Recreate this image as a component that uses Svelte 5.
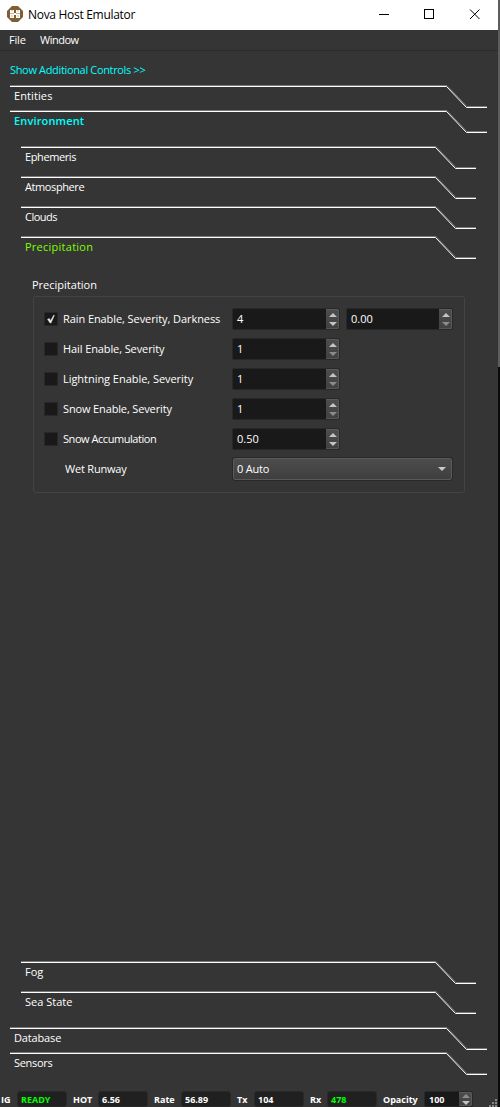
<script>
  const rows = [
    { label: 'Rain Enable, Severity, Darkness', checked: true, values: [{ v: '4', down: true }, { v: '0.00' }] },
    { label: 'Hail Enable, Severity', values: [{ v: '1' }] },
    { label: 'Lightning Enable, Severity', values: [{ v: '1' }] },
    { label: 'Snow Enable, Severity', values: [{ v: '1' }] },
    { label: 'Snow Accumulation', values: [{ v: '0.50', down: true }] }
  ];
  const status = [
    { label: 'IG', value: 'READY', on: true },
    { label: 'HOT', value: '6.56' },
    { label: 'Rate', value: '56.89' },
    { label: 'Tx', value: '104' },
    { label: 'Rx', value: '478', on: true }
  ];
  // Tracking per label, in px
  const tracking = {
    'Rain Enable, Severity, Darkness': -0.08,
    'Hail Enable, Severity': -0.1,
    'Lightning Enable, Severity': -0.04,
    'Snow Enable, Severity': -0.14,
    'Snow Accumulation': -0.45,
    Entities: 0.1,
    Environment: 0.15,
    Ephemeris: -0.4,
    Atmosphere: -0.4,
    Clouds: -0.5,
    Precipitation: 0.25,
    Database: -0.15,
    Sensors: -0.3
  };
</script>

{#snippet tab(label, w, cls)}
  <div class="tab {cls}">
    <svg width={w} height="23" viewBox="0 0 {w} 23" fill="none">
      <path d="M0 .5H{w - 40}L{w - 20} 21.5H{w}" stroke="#777" />
      <path d="M0 1.5H{w - 40.5}L{w - 20.5} 22.5H{w}" stroke="#fff" />
    </svg>
    <span style:letter-spacing="{tracking[label] ?? 0}px">{label}</span>
  </div>
{/snippet}

{#snippet spin(value, up, down)}
  <div class="spin">
    <span>{value}</span>
    <div class="arrows">
      <svg class="up" width="8" height="4" viewBox="0 0 8 4"><path d="M0 4L4 0L8 4Z" fill={up ? '#c4c4c4' : '#8b8b8b'} /></svg>
      <svg width="8" height="4" viewBox="0 0 8 4"><path d="M0 0L4 4L8 0Z" fill={down ? '#c4c4c4' : '#8b8b8b'} /></svg>
    </div>
  </div>
{/snippet}

<div class="screen">
  <div class="window">
    <header>
      <svg class="logo" width="16" height="16" viewBox="0 0 16 16">
        <path d="M5 0H11L16 5V11L11 16H5L0 11V5Z" fill="#805d32" />
        <path d="M3 4h4v3h2V4h4v8H9V9H7v3H3z" fill="#fff" />
        <path d="M3 7.5h4M9 7.5h4M5 9v2M11 9v2M5 4v1.500M11 4v1.500" stroke="#b39d7e" stroke-width=".8" />
      </svg>
      <span class="title">Nova Host Emulator</span>
      <svg class="controls" width="103" height="12" viewBox="0 0 103 12" fill="none" stroke="#000">
        <path d="M0 5.5H10" />
        <rect x="45.5" y=".5" width="9" height="9" />
        <path d="M91 .5L100.500 10M100.500 .5L91 10" />
      </svg>
    </header>
    <nav><span class="file">File</span><span class="win">Window</span></nav>
    <main>
      <div class="link"><span>Show Additional Controls &gt;&gt;</span></div>
      {@render tab('Entities', 477, '')}
      {@render tab('Environment', 477, 'env')}
      <section class="sub">
        {@render tab('Ephemeris', 455, '')}
        {@render tab('Atmosphere', 455, '')}
        {@render tab('Clouds', 455, '')}
        {@render tab('Precipitation', 455, 'active')}
        <div class="panel">
          <h2><span>Precipitation</span></h2>
          <div class="group">
            {#each rows as r}
              <div class="row">
                <div class="box">
                  {#if r.checked}
                    <svg width="12" height="12" viewBox="0 0 12 12"><path d="M2.5 6.3L4.3 5.5L5.6 7.6L8.8 2L9.4 2.4L6 10H5Z" fill="#e8e8e8" stroke="#e8e8e8" stroke-width=".4" /></svg>
                  {/if}
                </div>
                <div class="label"><span style:letter-spacing="{tracking[r.label]}px">{r.label}</span></div>
                {#each r.values as s}{@render spin(s.v, true, s.down)}{/each}
              </div>
            {/each}
            <div class="row">
              <div class="label wet"><span>Wet Runway</span></div>
              <div class="combo">
                <span>0 Auto</span>
                <svg width="8" height="4" viewBox="0 0 8 4"><path d="M0 0H8L4 4Z" fill="#c9c9c9" /></svg>
              </div>
            </div>
          </div>
        </div>
        {@render tab('Fog', 455, '')}
        {@render tab('Sea State', 455, '')}
      </section>
      {@render tab('Database', 477, '')}
      {@render tab('Sensors', 477, '')}
    </main>
    <footer>
      {#each status as s}
        <span class="name">{s.label}</span>
        <div class="field" class:on={s.on}>{s.value}</div>
      {/each}
      <span class="name">Opacity</span>
      {@render spin('100', false, true)}
      <svg class="grip" width="9" height="9" viewBox="0 0 9 9" fill="#858585">
        <path d="M6 0h2v2H6zM3 3h2v2H3zM6 3h2v2H6zM0 6h2v2H0zM3 6h2v2H3zM6 6h2v2H6z" />
      </svg>
    </footer>
  </div>
  <div class="edge"></div>
</div>

<style>
  :global(body) { margin: 0; background: #353535; }
  .screen { display: flex; width: 500px; height: 1107px; overflow: hidden; background: #353535; color: #fff; font: 11px/14px "Open Sans", "Noto Sans", sans-serif; white-space: nowrap; }
  .window { width: 498px; height: 1107px; display: flex; flex-direction: column; }
  .edge { width: 2px; background: linear-gradient(#5d5d5d 367px, #0a0a0a 367px); }
  header { height: 30px; background: #fff; color: #000; display: flex; align-items: flex-start; box-sizing: border-box; padding: 6px 0 0 7px; }
  .title { font: 12px/18px "Open Sans", sans-serif; margin-left: 5px; width: 346px; letter-spacing: -.3px; }
  .controls { margin: 3px 0 0 5px; }
  nav { height: 20px; border-bottom: 1px solid #2b2b2b; display: flex; padding-left: 9px; line-height: 20px; }
  .file { width: 31px; letter-spacing: -.2px; }
  .win { letter-spacing: -.5px; }
  main { height: 1036px; display: flex; flex-direction: column; padding-left: 10px; }
  .link { height: 34px; box-sizing: border-box; padding-top: 12px; color: #00ffff; letter-spacing: -.34px; }
  .tab { height: 25px; display: grid; flex: none; }
  .tab > * { grid-area: 1 / 1; }
  .tab span { padding: 4px 0 0 4px; }
  .env { height: 36px; color: #00ffff; font-weight: 600; }
  .sub { height: 881px; flex: none; display: flex; flex-direction: column; padding-left: 11px; }
  .sub .tab { height: 30px; }
  .active { color: #7fff00; font-weight: 500; }
  .panel { height: 695px; flex: none; box-sizing: border-box; padding: 12px 0 0 11px; }
  h2 { font: inherit; margin: 0; height: 18px; }
  .group { margin-left: 1px; width: 432px; height: 197px; box-sizing: border-box; border: 1px solid #444; border-radius: 3px; padding: 7px 0 0 10px; }
  .row { height: 30px; display: flex; align-items: center; }
  .box { width: 14px; height: 14px; box-sizing: border-box; border: 1px solid #282828; background: #191919; flex: none; }
  .box svg { display: block; }
  .label { width: 169px; padding-left: 5px; }
  .wet { width: 168px; padding-left: 21px; letter-spacing: -.2px; }
  .spin { width: 108px; height: 22px; box-sizing: border-box; border: 1px solid #282828; border-radius: 2px; background: #191919; display: flex; justify-content: space-between; padding-left: 4px; margin-right: 6px; line-height: 20px; flex: none; }
  .spin + .spin { width: 107px; margin: 0; }
  .arrows { width: 13px; background: linear-gradient(#4d4d4d, #414141); box-shadow: inset -1px 0 #5a5a5a, inset 0 1px #5a5a5a, inset 0 -1px #555; border-radius: 0 2px 2px 0; display: flex; flex-direction: column; align-items: center; justify-content: center; gap: 5px; }
  .arrows svg { display: block; }
  .combo { width: 219px; height: 22px; box-sizing: border-box; border: 1px solid #5a5a5a; outline: 1px solid #292929; border-radius: 2px; background: linear-gradient(#4c4c4c, #3f3f3f); display: flex; align-items: center; justify-content: space-between; padding: 0 5px 0 3px; letter-spacing: -.2px; }
  footer { height: 16px; margin-top: 4px; display: grid; grid-template-columns: 16px 50px 31px 50px 33px 50px 23px 50px 23px 50px 47px 49px 25px; padding-left: 1px; font: bold 9px/17px "Open Sans", sans-serif; }
  .name { padding-left: 6px; }
  .name:first-child { padding-left: 0; }
  .field { background: #202020; border: 1px solid #292929; border-radius: 3px; box-sizing: border-box; height: 16px; padding-left: 3px; line-height: 15px; }
  .on { color: #00ff00; }
  footer .spin { width: 49px; height: 16px; margin: 0; line-height: 15px; overflow: hidden; }
  footer .arrows { gap: 3px; }
  .grip { align-self: end; justify-self: end; }
</style>
